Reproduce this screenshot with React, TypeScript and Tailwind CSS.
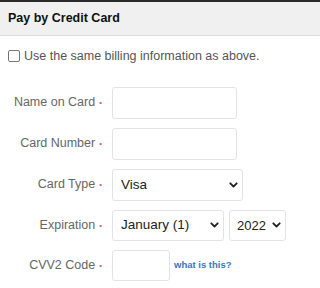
import React from 'react';

const Label: React.FC<{ text: string }> = ({ text }) => (
  <div className="w-[104px] shrink-0 text-right text-[12.5px] text-[#666] pr-[2px]">
    {text}
    <span className="ml-[4px] text-[8px] text-[#e05a6f] align-middle">•</span>
  </div>
);

const Chevron = () => (
  <svg width="9" height="6" viewBox="0 0 9 6" className="shrink-0">
    <path d="M1.3 1.3 L4.5 4.5 L7.7 1.3" fill="none" stroke="#222" strokeWidth="1.8" strokeLinecap="round" strokeLinejoin="round" />
  </svg>
);

const Select: React.FC<{ value: string; className: string }> = ({ value, className }) => (
  <div className={`flex items-center justify-between gap-1 rounded-[3px] border border-[#e3e3e3] bg-white pr-[4px] text-[13.5px] text-[#222] ${className}`}>
    <span className="whitespace-nowrap">{value}</span>
    <Chevron />
  </div>
);

export default function App() {
  return (
    <div className="w-full bg-white font-['Liberation_Sans',Arial,sans-serif]">
      <div className="h-[2px] bg-[#2a2a2a]" />
      <div className="flex h-[34px] items-center border-b border-[#dcdcdc] bg-[#f0f0f0] px-2">
        <span className="text-[12.5px] font-bold text-[#111]">Pay by Credit Card</span>
      </div>

      <div className="mt-[11px] flex items-center gap-[4px] px-2">
        <div className="h-[12px] w-[12px] rounded-[2px] border border-[#777] bg-white" />
        <span className="text-[12.5px] text-[#555]">Use the same billing information as above.</span>
      </div>

      <div className="mt-[21px] flex flex-col gap-[9px]">
        <div className="flex items-center">
          <Label text="Name on Card" />
          <div className="ml-2 h-[32px] w-[125px] rounded-[3px] border border-[#e3e3e3]" />
        </div>
        <div className="flex items-center">
          <Label text="Card Number" />
          <div className="ml-2 h-[32px] w-[125px] rounded-[3px] border border-[#e3e3e3]" />
        </div>
        <div className="flex items-center">
          <Label text="Card Type" />
          <Select value="Visa" className="ml-2 h-[32px] w-[131px] pl-[8px]" />
        </div>
        <div className="flex items-center">
          <Label text="Expiration" />
          <Select value="January (1)" className="ml-2 h-[31px] w-[112px] pl-[8px]" />
          <Select value="2022" className="ml-[5px] h-[31px] w-[57px] pl-[7px] text-[13px]" />
        </div>
        <div className="flex items-center">
          <Label text="CVV2 Code" />
          <div className="ml-2 h-[31px] w-[58px] rounded-[3px] border border-[#e3e3e3]" />
          <a className="ml-[4px] text-[9.5px] font-bold text-[#3a78b5]">what is this?</a>
        </div>
      </div>
    </div>
  );
}
